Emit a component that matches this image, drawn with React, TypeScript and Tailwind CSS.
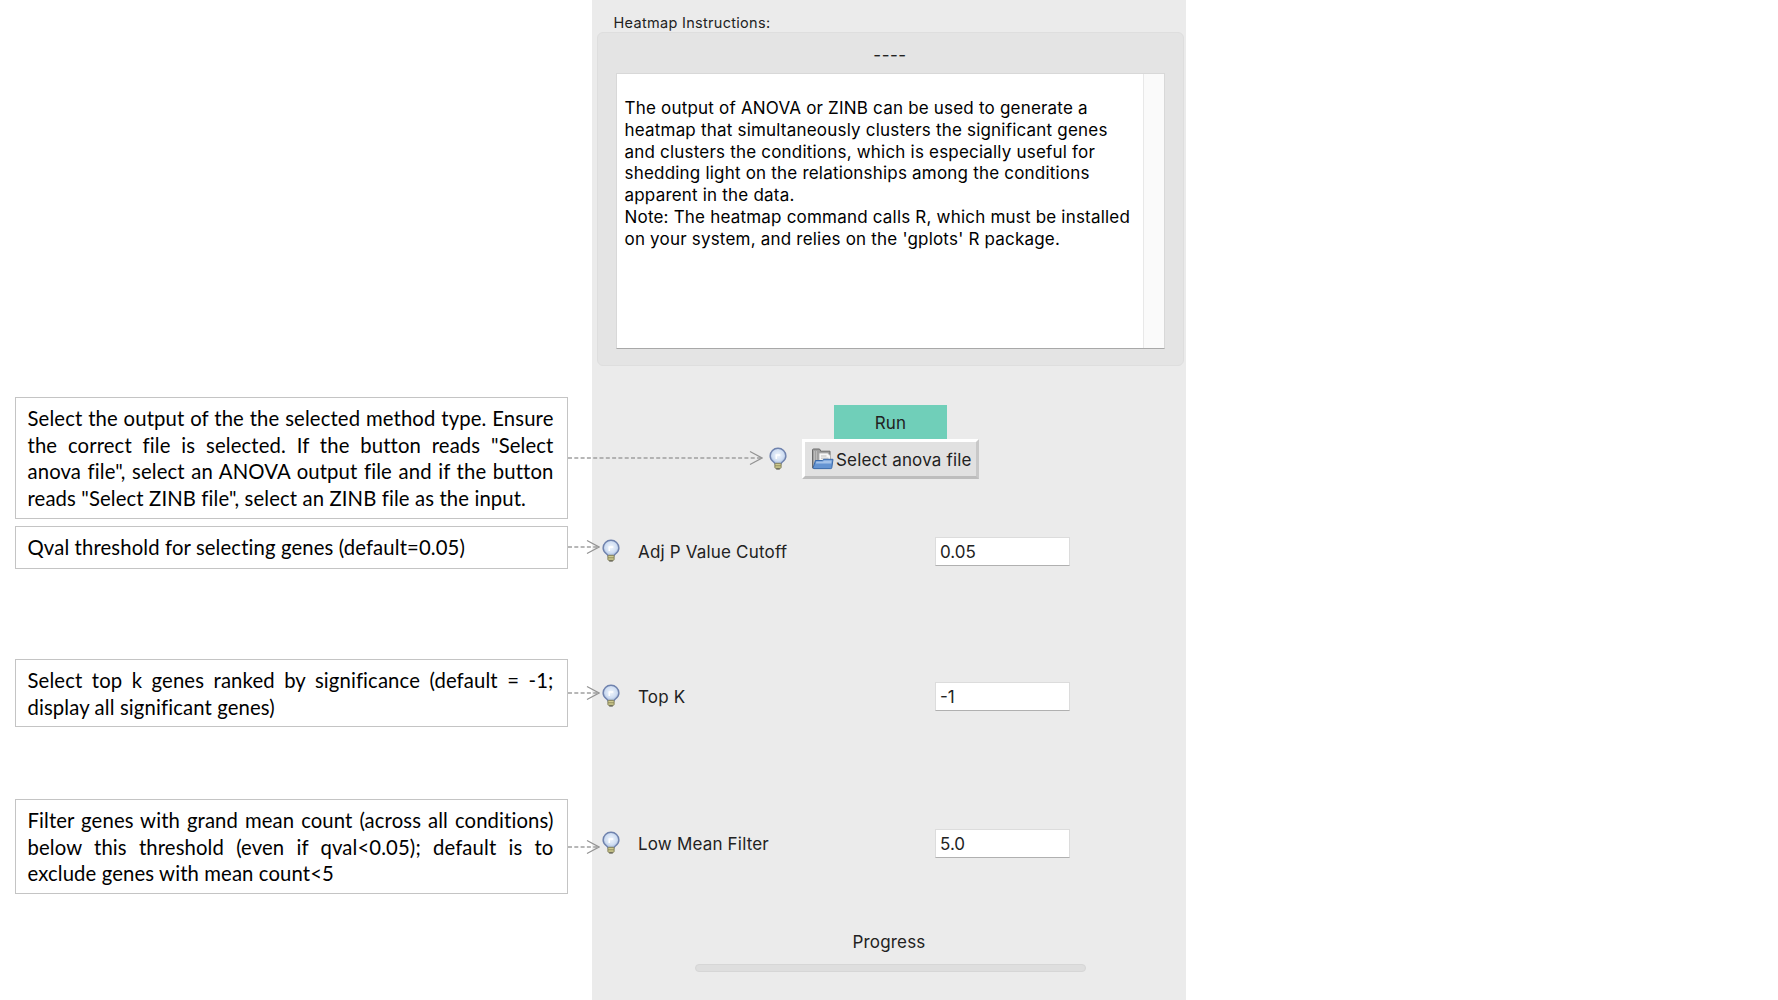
import React from "react";

function Bulb() {
  return (
    <svg width="20" height="24" viewBox="0 0 20 24" className="block shrink-0">
      <defs>
        <radialGradient id="glass" cx="0.5" cy="0.45" r="0.6">
          <stop offset="0" stopColor="#f1f6fd" />
          <stop offset="0.6" stopColor="#d0def2" />
          <stop offset="1" stopColor="#94abd4" />
        </radialGradient>
      </defs>
      <path d="M10 1.300a7.800 7.800 0 0 0-7.900 7.700c0 2.900 1.700 4.600 3.500 6 .8.600 1.200 1.100 1.300 1.800h6.200c.1-.7.5-1.200 1.300-1.800 1.800-1.400 3.500-3.100 3.500-6A7.800 7.800 0 0 0 10 1.300z" fill="url(#glass)" stroke="#6f82ad" strokeWidth="1.400" />
      <path d="M8.300 12V8h4" fill="none" stroke="#fff" strokeWidth="1.600" />
      <rect x="6.900" y="16.300" width="6.200" height="5" rx="0.800" fill="#cfcb90" stroke="#84815c" strokeWidth="1" />
      <path d="M7 18.800h6" stroke="#8a8658" strokeWidth="0.900" />
      <path d="M8.200 22h3.600" stroke="#5b5a4c" strokeWidth="1.200" />
    </svg>
  );
}

function FolderIcon() {
  return (
    <svg width="23" height="22" viewBox="0 0 23 22" className="block shrink-0">
      <path d="M1.500 20V2q0-1 1-1h5.500q1 0 1.300 1l.3 1.200h9.400v16z" fill="#a0a0a0" stroke="#6b6b6b" />
      <path d="M3.500 3v16M5.500 3v16" stroke="#c0c0c0" strokeWidth="0.800" />
      <path d="M8 5h8.500l3 2.800v8H8z" fill="#f7f7f7" stroke="#a9a9a9" strokeWidth="0.800" />
      <path d="M10 8h5.500M10 10.200h7.500" stroke="#b5b5b5" strokeWidth="0.900" />
      <path d="M4.500 12.500h7l1-1.200h9.500l-1.200 8.400q-.1.900-1 .9H3q-1 0-.8-1z" fill="#6494d2" stroke="#3a6aab" />
      <path d="M5.300 13.600h6.700l1-1.200h7.700l-.4 3H4.900z" fill="#a3c2e9" />
    </svg>
  );
}

function Arrow({ length }: { length: number }) {
  return (
    <svg width={length} height="16" viewBox={`0 0 ${length} 16`} className="relative z-10 block shrink-0">
      <path d={`M0 8H${length - 2}`} stroke="#a0a0a0" strokeWidth="1.300" strokeDasharray="4 2.300" />
      <path d={`M${length - 13} 1.500L${length - 1} 8L${length - 13} 14.500`} fill="none" stroke="#939393" strokeWidth="1.200" />
    </svg>
  );
}

type NoteProps = { lines: string[]; box: string; arrow: number; arrowPad: string };

function Note({ lines, box, arrow, arrowPad }: NoteProps) {
  return (
    <div className="flex w-[768px] items-start">
      <div className={`w-[553px] shrink-0 border border-[#c4c4c4] pl-[11.500px] ${box}`}>
        {lines.map((text, i) => (
          <div
            key={text}
            className={
              i < lines.length - 1
                ? "h-[26.700px] w-[526px] whitespace-nowrap leading-[26.700px] text-justify [text-align-last:justify]"
                : "h-[26.700px] w-[526px] whitespace-nowrap leading-[26.700px]"
            }
          >
            {text}
          </div>
        ))}
      </div>
      <div className={arrowPad}>
        <Arrow length={arrow} />
      </div>
    </div>
  );
}

function Field({ label, value }: { label: string; value: string }) {
  return (
    <div className="flex h-[30px] items-center pl-[9px]">
      <Bulb />
      <div className="ml-[17px] w-[297px] whitespace-nowrap pt-[3px]">{label}</div>
      <div className="flex h-[29px] w-[135px] items-center border border-[#dcdcdc] border-b-[#b0b0b0] bg-white pl-[4px] pt-[3px] tracking-normal">{value}</div>
    </div>
  );
}

export default function App() {
  return (
    <div className="flex h-[1000px] w-[1778px] overflow-hidden bg-white text-black">
      <div className="w-[592px] shrink-0 pl-[15px] pt-[397px] font-['Lato',sans-serif] text-[20.300px] font-normal tracking-[0.120px]">
        <Note
          box="h-[122px] pt-[7px]"
          arrow={195}
          arrowPad="pt-[53px]"
          lines={[
            "Select the output of the the selected method type. Ensure",
            "the correct file is selected. If the button reads \"Select",
            "anova file\", select an ANOVA output file and if the button",
            "reads \"Select ZINB file\", select an ZINB file as the input.",
          ]}
        />
        <div className="h-[7px]" />
        <Note box="h-[43px] pt-[7px]" arrow={32} arrowPad="pt-[13px]" lines={["Qval threshold for selecting genes (default=0.05)"]} />
        <div className="h-[90px]" />
        <Note
          box="h-[68px] pt-[7px]"
          arrow={32}
          arrowPad="pt-[26px]"
          lines={["Select top k genes ranked by significance (default = -1;", "display all significant genes)"]}
        />
        <div className="h-[72px]" />
        <Note
          box="h-[95px] pt-[7px]"
          arrow={32}
          arrowPad="pt-[40px]"
          lines={[
            "Filter genes with grand mean count (across all conditions)",
            "below this threshold (even if qval<0.05); default is to",
            "exclude genes with mean count<5",
          ]}
        />
      </div>

      <div className="h-[999.500px] w-[594px] shrink-0 bg-[#ebebeb] font-['Inter',sans-serif] text-[17px] tracking-[0.180px] text-[#222]">
        <div className="h-[32px] pl-[21.500px] pt-[13px] text-[14.500px] leading-[20px] tracking-[0.300px]">Heatmap Instructions:</div>
        <div className="ml-[5px] h-[334px] w-[587px] rounded-[6px] border border-[#dedede] bg-[#e4e4e4] pl-[18px]">
          <div className="h-[40px] pr-[19px] pt-[12px] text-center leading-[20px] tracking-[0.500px]">----</div>
          <div className="flex h-[276px] w-[549px] border border-[#d8d8d8] border-b-[#a8a8a8] bg-white">
            <div className="w-[526px] whitespace-nowrap pl-[7.500px] pt-[24px] leading-[21.800px] tracking-[0.200px] text-black">
              <div>The output of ANOVA or ZINB can be used to generate a</div>
              <div>heatmap that simultaneously clusters the significant genes</div>
              <div>and clusters the conditions, which is especially useful for</div>
              <div>shedding light on the relationships among the conditions</div>
              <div>apparent in the data.</div>
              <div>Note: The heatmap command calls R, which must be installed</div>
              <div>on your system, and relies on the 'gplots' R package.</div>
            </div>
            <div className="flex-1 border-l border-[#e8e8e8] bg-[#fafafa]" />
          </div>
        </div>
        <div className="ml-[242px] mt-[39px] flex h-[34px] w-[113px] items-center justify-center bg-[#70cfb9] pt-[4px]">Run</div>
        <div className="flex h-[40px] items-center pl-[176px]">
          <Bulb />
          <div className="ml-[14px] flex h-[40px] w-[177px] items-center whitespace-nowrap border-[3px] border-b-[#bdbdbd] border-l-white border-r-[#c8c8c8] border-t-white bg-[#e1e1e1] pl-[6px]">
            <FolderIcon />
            <span className="ml-[2px] pt-[3px]">Select anova file</span>
          </div>
        </div>
        <div className="h-[57px]" />
        <Field label="Adj P Value Cutoff" value="0.05" />
        <div className="h-[115px]" />
        <Field label="Top K" value="-1" />
        <div className="h-[117px]" />
        <Field label="Low Mean Filter" value="5.0" />
        <div className="mt-[72px] text-center leading-[24px]">Progress</div>
        <div className="ml-[103px] mt-[10px] h-[8px] w-[391px] rounded-full border border-[#d6d6d6] bg-[#dedede]" />
      </div>
    </div>
  );
}
